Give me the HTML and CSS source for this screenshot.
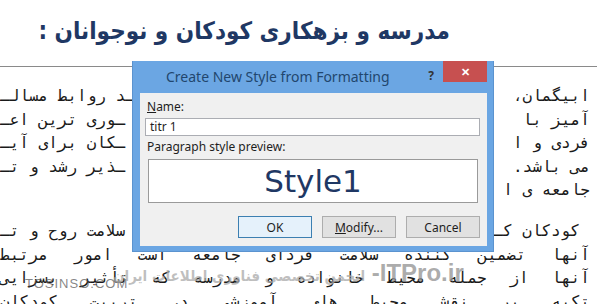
FILE: index.html
```html
<!DOCTYPE html>
<html lang="fa">
<head>
  <meta charset="UTF-8" />
  <meta name="viewport" content="width=device-width, initial-scale=1.0" />
  <title>Create New Style from Formatting</title>
  <link rel="stylesheet" href="styles.css">
</head>
<body>
  <div class="doc">
    <h1 class="doc-title">مدرسه و بزهکاری کودکان و نوجوانان :</h1>
    <div class="rule"></div>

    <div class="para">
      <div class="line split"><span>ابیگمان،</span><span>ـد روابط مسالـ</span></div>
      <div class="line split"><span>آمیز با</span><span>ـوری ترین اعـ</span></div>
      <div class="line split"><span>فردی و ا</span><span>ـکان برای آیـ</span></div>
      <div class="line split"><span>می باشد.</span><span>ـذیر رشد و تـ</span></div>
      <div class="line split"><span>جامعه ی ا</span><span></span></div>
    </div>

    <div class="para">
      <div class="line split first"><span>کودکان کـ</span><span>ـه سلامت روح و تـ</span></div>
      <div class="line full">آنها تضمین کننده سلامت فردای جامعه است امور مرتبط</div>
      <div class="line full">آنها از جمله محیط خانواده و مدرسه که تأثیر بسزایی</div>
      <div class="line full">تکیه بر نقش محیط های آموزشی در تربیت کودکان</div>
    </div>
  </div>

  <div class="mark mark-site">TOSINSO.COM</div>
  <div class="mark mark-itpro"><span class="mark-fa">انجمن تخصصی فناوری اطلاعات ایران</span> -ITPro.ir</div>

  <div class="dialog">
    <div class="dlg-head">
      <span class="dlg-title">Create New Style from Formatting</span>
      <span class="dlg-help">?</span>
      <span class="dlg-close">&#x2715;</span>
    </div>
    <div class="dlg-body">
      <div class="dlg-label"><u>N</u>ame:</div>
      <div class="dlg-input">titr 1</div>
      <div class="dlg-label">Paragraph style preview:</div>
      <div class="dlg-preview">Style1</div>
      <div class="dlg-buttons">
        <button class="btn btn-default">OK</button>
        <button class="btn"><u>M</u>odify...</button>
        <button class="btn">Cancel</button>
      </div>
    </div>
  </div>
</body>
</html>
```

FILE: styles.css
```css
body {
  margin: 0;
  width: 607px;
  height: 304px;
  overflow: hidden;
  position: relative;
  background-color: #fff;
  color: #1a1a1a;
}

.doc {
  padding-right: 17px;
}

.doc-title {
  direction: rtl;
  text-align: right;
  white-space: nowrap;
  margin: 0;
  padding: 9px 140px 0 0;
  height: 49px;
  font-family: 'DejaVu Sans', sans-serif;
  font-weight: bold;
  font-stretch: condensed;
  font-size: 24px;
  line-height: 44px;
  color: #1f3864;
}

.rule {
  margin: 8px -7px 0 0;
  height: 1px;
  background-color: #8a8a8a;
}

.para {
  direction: rtl;
  font-family: 'DejaVu Sans Mono', monospace;
  font-size: 16px;
  line-height: 23.5px;
  margin-top: 17px;
}

.para + .para {
  margin-top: 17.5px;
}

.line {
  white-space: nowrap;
  height: 23.5px;
}

.split {
  display: flex;
  justify-content: space-between;
}

.split.first {
  padding-right: 10px;
}

.full {
  text-align: justify;
  text-align-last: justify;
}

/* watermarks lying over the text */
.mark {
  position: absolute;
  white-space: nowrap;
  font-family: 'Liberation Sans', sans-serif;
}

.mark-site {
  left: 25px;
  top: 276px;
  font-size: 13px;
  letter-spacing: 1px;
  color: rgba(80, 80, 80, 0.7);
}

.mark-itpro {
  left: 113px;
  top: 259px;
  font-size: 24px;
  font-weight: bold;
  color: rgba(150, 150, 150, 0.8);
}

.mark-fa {
  font-family: 'DejaVu Sans', sans-serif;
  font-stretch: condensed;
  font-size: 15px;
  color: rgba(170, 170, 170, 0.75);
}

/* dialog */
.dialog {
  position: absolute;
  left: 132px;
  top: 61px;
  width: 362px;
  height: 191px;
  box-sizing: border-box;
  background-color: #6ba6e3;
  border: 1px solid #5b93cf;
  border-top: none;
  padding: 0 6px 6px 7px;
  display: flex;
  flex-direction: column;
  font-family: 'Noto Sans', sans-serif;
}

.dlg-head {
  height: 32px;
  display: flex;
  align-items: flex-start;
}

.dlg-title {
  flex: 1;
  margin-left: 26px;
  line-height: 32px;
  font-size: 14px;
  color: #22466e;
}

.dlg-help {
  margin: 6px 9px 0 0;
  font-size: 12px;
  font-weight: bold;
  color: #333;
}

.dlg-close {
  width: 44px;
  height: 21px;
  background-color: #c75050;
  color: #fff;
  font-size: 11px;
  font-weight: bold;
  text-align: center;
  line-height: 21px;
}

.dlg-body {
  flex: 1;
  background-color: #f0f0f0;
  padding: 6px 7px 8px 5px;
  font-size: 12px;
  color: #1e1e1e;
}

.dlg-label {
  line-height: 16px;
  padding-left: 2px;
}

.dlg-input {
  height: 18px;
  box-sizing: border-box;
  margin: 3px 0 3px;
  padding-left: 4px;
  background-color: #fff;
  border: 1px solid #abadb3;
  line-height: 16px;
}

.dlg-preview {
  height: 44px;
  box-sizing: border-box;
  margin: 4px 2px 0 3px;
  background-color: #fff;
  border: 1px solid #9a9a9a;
  text-align: center;
  font-family: 'DejaVu Sans', sans-serif;
  font-size: 31px;
  line-height: 42px;
  color: #1f3864;
}

.dlg-buttons {
  display: flex;
  justify-content: flex-end;
  gap: 10px;
  margin-top: 13px;
}

.btn {
  width: 74px;
  height: 22px;
  padding: 0;
  background-color: #e1e1e1;
  border: 1px solid #adadad;
  font-family: 'Noto Sans', sans-serif;
  font-size: 12px;
  color: #1e1e1e;
}

.btn-default {
  border-color: #3c7fb1;
  background-color: #e5f1fb;
}
```
